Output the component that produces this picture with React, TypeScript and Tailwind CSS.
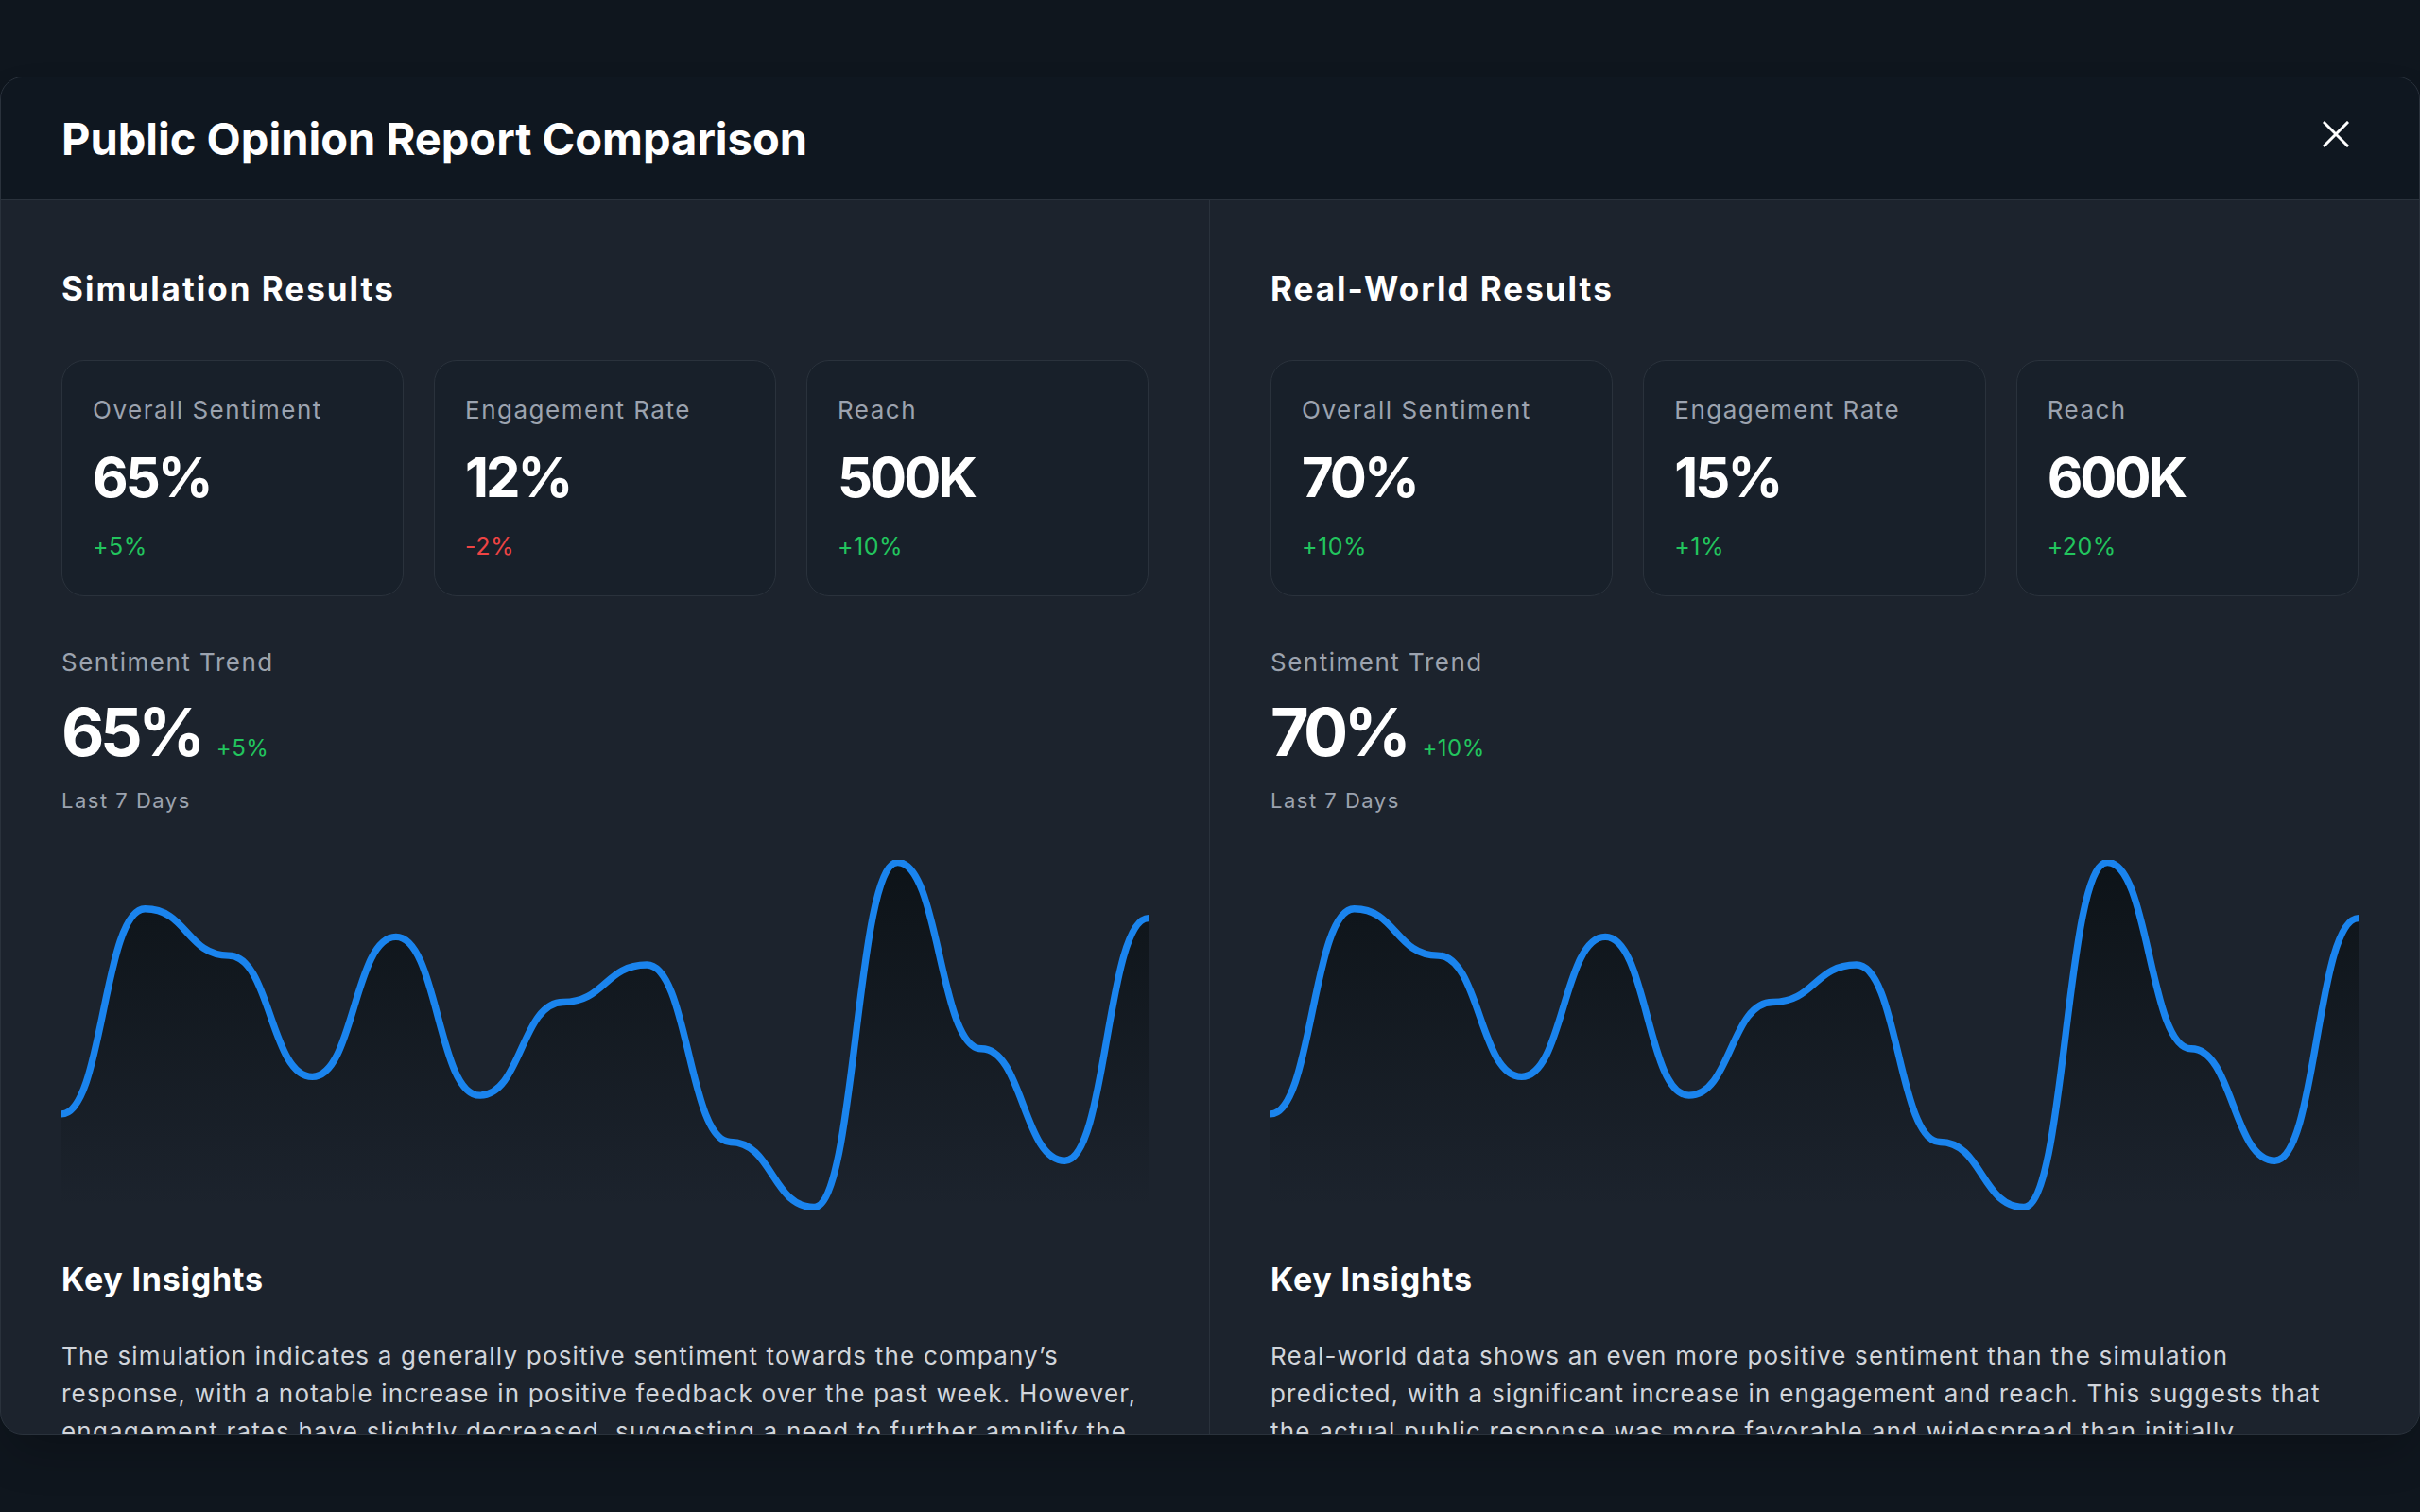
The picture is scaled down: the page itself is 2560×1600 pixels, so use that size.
import React from 'react';

interface Stat {
  label: string;
  value: string;
  change: string;
  up: boolean;
}

interface Column {
  title: string;
  stats: Stat[];
  trend: string;
  trendChange: string;
  insight: string;
}

const columns: Column[] = [
  {
    title: 'Simulation Results',
    stats: [
      { label: 'Overall Sentiment', value: '65%', change: '+5%', up: true },
      { label: 'Engagement Rate', value: '12%', change: '-2%', up: false },
      { label: 'Reach', value: '500K', change: '+10%', up: true },
    ],
    trend: '65%',
    trendChange: '+5%',
    insight:
      'The simulation indicates a generally positive sentiment towards the company’s response, with a notable increase in positive feedback over the past week. However, engagement rates have slightly decreased, suggesting a need to further amplify the message across key channels.',
  },
  {
    title: 'Real-World Results',
    stats: [
      { label: 'Overall Sentiment', value: '70%', change: '+10%', up: true },
      { label: 'Engagement Rate', value: '15%', change: '+1%', up: true },
      { label: 'Reach', value: '600K', change: '+20%', up: true },
    ],
    trend: '70%',
    trendChange: '+10%',
    insight:
      'Real-world data shows an even more positive sentiment than the simulation predicted, with a significant increase in engagement and reach. This suggests that the actual public response was more favorable and widespread than initially anticipated.',
  },
];

const curve =
  'M0 109C18.1538 109 18.1538 21 36.3077 21C54.4615 21 54.4615 41 72.6154 41C90.7692 41 90.7692 93 108.923 93C127.077 93 127.077 33 145.231 33C163.385 33 163.385 101 181.538 101C199.692 101 199.692 61 217.846 61C236 61 236 45 254.154 45C272.308 45 272.308 121 290.462 121C308.615 121 308.615 149 326.769 149C344.923 149 344.923 1 363.077 1C381.231 1 381.231 81 399.385 81C417.538 81 417.538 129 435.692 129C453.846 129 453.846 25 472 25';

const TrendChart: React.FC<{ id: string }> = ({ id }) => (
  <svg
    className="block w-full h-[370px]"
    viewBox="0 0 472 150"
    preserveAspectRatio="none"
    fill="none"
  >
    <defs>
      <linearGradient id={id} x1="236" y1="1" x2="236" y2="149" gradientUnits="userSpaceOnUse">
        <stop stopColor="#0d1318" />
        <stop offset="1" stopColor="#0d1318" stopOpacity="0" />
      </linearGradient>
    </defs>
    <path d={`${curve}V149H0V109Z`} fill={`url(#${id})`} />
    <path d={curve} stroke="#1a84ee" strokeWidth="3" strokeLinecap="round" />
  </svg>
);

const StatCard: React.FC<{ stat: Stat }> = ({ stat }) => (
  <div className="h-[250px] rounded-3xl border border-[#2a323c] bg-[#18202a] px-8 pt-[34px]">
    <div className="text-[26px] leading-[36px] tracking-[1.5px] text-[#9ca3af]">{stat.label}</div>
    <div className="mt-[24px] text-[58px] leading-none font-bold tracking-[-3px] text-white">{stat.value}</div>
    <div
      className={
        stat.up
          ? 'mt-[26px] text-[25px] leading-[36px] tracking-[0.5px] text-[#22c55e]'
          : 'mt-[26px] text-[25px] leading-[36px] tracking-[0.5px] text-[#ef4444]'
      }
    >
      {stat.change}
    </div>
  </div>
);

const ResultColumn: React.FC<{ col: Column; idx: number; last?: boolean }> = ({ col, idx, last }) => (
  <section className={last ? 'px-16 pt-[71px]' : 'px-16 pt-[71px] border-r border-[#2a323c]'}>
    <h2 className="text-[35px] leading-[44px] font-bold tracking-[2px] text-white">{col.title}</h2>

    <div className="mt-[54px] grid grid-cols-3 gap-8">
      {col.stats.map((s) => (
        <StatCard key={s.label} stat={s} />
      ))}
    </div>

    <div className="mt-[52px] text-[26px] leading-[36px] tracking-[1.5px] text-[#9ca3af]">Sentiment Trend</div>
    <div className="mt-[21px] flex items-baseline gap-[16px]">
      <span className="text-[70px] leading-none font-bold tracking-[-4.5px] text-white">{col.trend}</span>
      <span className="text-[24px] tracking-[0.5px] text-[#22c55e]">{col.trendChange}</span>
    </div>
    <div className="mt-[21px] text-[22px] leading-[32px] tracking-[1.5px] text-[#9ca3af]">Last 7 Days</div>

    <div className="mt-[47px]">
      <TrendChart id={`trend-fill-${idx}`} />
    </div>

    <h3 className="mt-[52px] text-[34px] leading-[44px] font-bold tracking-[0.8px] text-white">Key Insights</h3>
    <p className="mt-[39px] text-[26px] leading-[40px] tracking-[1.2px] text-[#d1d5db]">{col.insight}</p>
  </section>
);

export default function App() {
  return (
    <div
      className="min-h-screen bg-[#0f161e] pt-[81px]"
      style={{ fontFamily: 'Inter, "Noto Sans", sans-serif' }}
    >
      <div className="h-[1437px] w-full overflow-hidden rounded-3xl border border-[#2a323c] bg-[#1c232d] shadow-2xl">
        {/* header */}
        <header className="flex h-[130px] items-center justify-between border-b border-[#2a323c] bg-[#0f1720] px-16">
          <h1 className="text-[47px] leading-none font-bold text-white">Public Opinion Report Comparison</h1>
          <button className="mb-[10px] p-[10px] text-white">
            <svg width="28" height="28" viewBox="0 0 28 28" fill="none">
              <path d="M2 2L26 26M26 2L2 26" stroke="currentColor" strokeWidth="3" strokeLinecap="square" />
            </svg>
          </button>
        </header>

        <div className="grid grid-cols-2">
          {columns.map((c, i) => (
            <ResultColumn key={c.title} col={c} idx={i} last={i === columns.length - 1} />
          ))}
        </div>
      </div>
    </div>
  );
}
